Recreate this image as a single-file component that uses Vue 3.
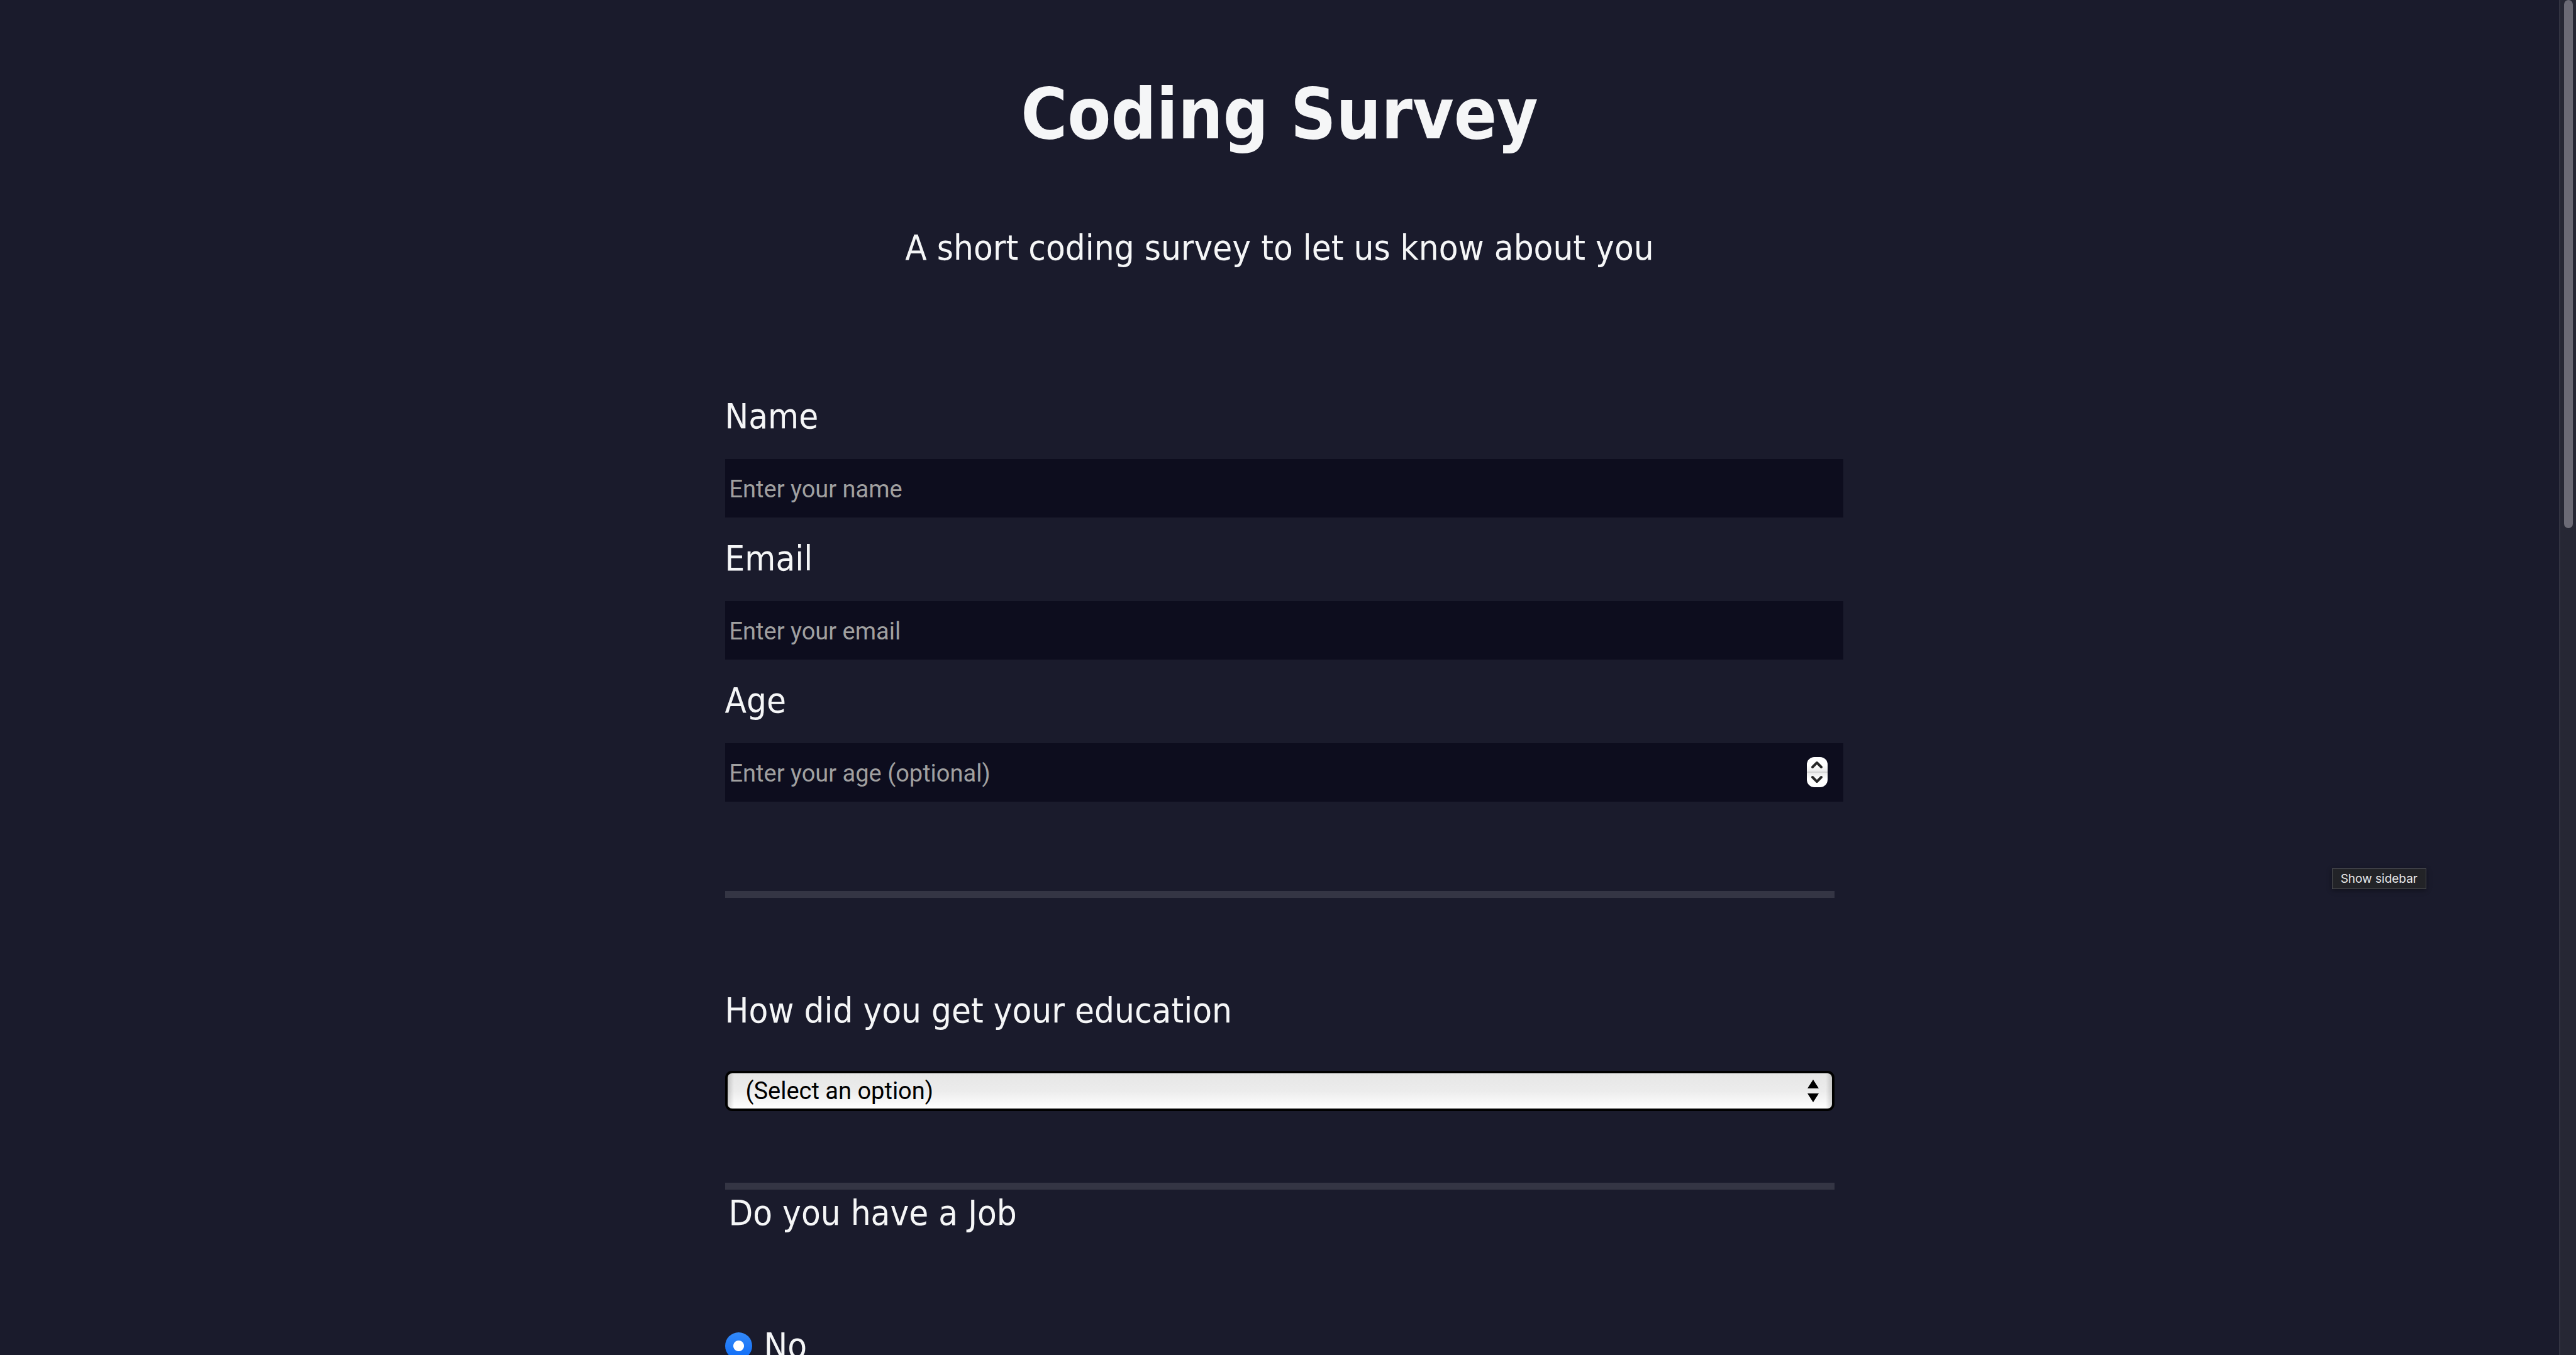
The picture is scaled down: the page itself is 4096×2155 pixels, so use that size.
<script setup>
import { reactive } from 'vue'

const form = reactive({ name: '', email: '', age: '', education: '', job: 'no' })

const fields = [
  { key: 'name', type: 'text', label: 'Name', placeholder: 'Enter your name' },
  { key: 'email', type: 'email', label: 'Email', placeholder: 'Enter your email' },
  { key: 'age', type: 'number', label: 'Age', placeholder: 'Enter your age (optional)' },
]

function step(by) {
  form.age = Math.max(0, Number(form.age || 0) + by)
}
</script>

<template>
  <div class="window">
    <main class="page">
      <h1 class="title">Coding Survey</h1>
      <p class="intro">A short coding survey to let us know about you</p>

      <form class="survey" @submit.prevent>
        <div v-for="field in fields" :key="field.key" class="field">
          <label class="label" :for="field.key">{{ field.label }}</label>
          <div class="control">
            <input
              :id="field.key"
              v-model="form[field.key]"
              class="input"
              :type="field.type"
              :placeholder="field.placeholder"
            />
            <div v-if="field.type === 'number'" class="stepper">
              <button type="button" aria-label="Increase" @click="step(1)">
                <svg viewBox="0 0 20 14"><path d="M3 11 L10 4 L17 11" /></svg>
              </button>
              <button type="button" aria-label="Decrease" @click="step(-1)">
                <svg viewBox="0 0 20 14"><path d="M3 3 L10 10 L17 3" /></svg>
              </button>
            </div>
          </div>
        </div>

        <hr class="rule rule-first" />

        <label class="label" for="education">How did you get your education</label>
        <div class="picker">
          <select id="education" v-model="form.education" class="select">
            <option value="">(Select an option)</option>
          </select>
          <svg class="arrows" viewBox="0 0 18 36" aria-hidden="true">
            <path d="M9 0 L18 14 H0 Z M0 22 H18 L9 36 Z" />
          </svg>
        </div>

        <hr class="rule rule-second" />

        <fieldset class="group">
          <legend class="label legend">Do you have a Job</legend>
          <label class="choice label">
            <input v-model="form.job" class="radio" type="radio" name="job" value="no" />
            No
          </label>
        </fieldset>
      </form>
    </main>

    <div class="scrollbar"><div class="thumb"></div></div>
    <div class="tooltip" role="tooltip">Show sidebar</div>
  </div>
</template>

<style>
body {
  background: #1a1b2c;
}
</style>

<style scoped>
.window {
  position: relative;
  display: flex;
  height: 100vh;
  overflow: hidden;
  background: #1a1b2c;
  color: #f5f6f7;
  font-family: Tahoma, "DejaVu Sans Condensed", "DejaVu Sans", sans-serif;
  font-size: 56px;
  line-height: 68px;
}

.page {
  flex: 1;
  padding-top: 113px;
}

.title {
  margin: 0;
  font-size: 112px;
  line-height: 136px;
  font-weight: 700;
  text-align: center;
}

.intro {
  margin: 111px 0 200px;
  text-align: center;
}

.survey {
  width: 100%;
  max-width: 1764px;
  margin: 0 auto;
}

.field {
  margin-bottom: 31px;
}

.label {
  display: block;
}

.control {
  position: relative;
  width: calc(100% + 14px);
  margin-top: 34px;
}

.input {
  display: block;
  box-sizing: border-box;
  width: 100%;
  height: 93px;
  padding: 2px 7px 0;
  border: 0;
  background: #0d0d1e;
  color: #f5f6f7;
  font-family: Roboto, sans-serif;
  font-size: 38px;
  appearance: textfield;
}

.input::-webkit-inner-spin-button {
  display: none;
}

.input::placeholder {
  color: #a0a0a0;
}

.stepper {
  position: absolute;
  top: 22px;
  right: 25px;
  display: flex;
  flex-direction: column;
  width: 33px;
  height: 48px;
  overflow: hidden;
  border-radius: 12px;
  background: linear-gradient(#fff 28%, #ececec 47%, #c8c8c8 50%, #ececec 53%, #fff 72%);
}

.stepper button {
  display: flex;
  flex: 1;
  align-items: center;
  justify-content: center;
  padding: 0;
  border: 0;
  background: none;
}

.stepper svg {
  width: 20px;
  height: 14px;
  fill: none;
  stroke: #262626;
  stroke-width: 4;
  stroke-linecap: round;
  stroke-linejoin: round;
}

.rule {
  height: 11px;
  border: 0;
  background: #343544;
}

.rule-first {
  margin: 142px 0 145px;
}

.rule-second {
  margin: 114px 0 3px;
}

.picker {
  position: relative;
  margin-top: 62px;
}

.select {
  display: block;
  box-sizing: border-box;
  width: 100%;
  height: 64px;
  padding: 0 60px 0 29px;
  border: 4px solid #000;
  border-radius: 11px;
  background:
    linear-gradient(90deg, rgba(0, 0, 0, 0.16), transparent 10px, transparent calc(100% - 10px), rgba(0, 0, 0, 0.16)),
    linear-gradient(#e6e6e6, #ececec 50%, #fff);
  color: #000;
  font-family: Roboto, sans-serif;
  font-size: 38px;
  appearance: none;
}

.arrows {
  position: absolute;
  top: 14px;
  right: 25px;
  width: 18px;
  height: 36px;
  pointer-events: none;
}

.group {
  margin: 0;
  padding: 0;
  border: 0;
}

.legend {
  padding: 0 6px;
}

.choice {
  display: flex;
  align-items: center;
  gap: 19px;
  margin-top: 143px;
}

.radio {
  width: 43px;
  height: 43px;
  margin: 0;
  border-radius: 50%;
  background:
    radial-gradient(circle, #fff 8px, transparent 9px),
    linear-gradient(#3389f8, #0f6df8);
  appearance: none;
}

.scrollbar {
  box-sizing: border-box;
  width: 27px;
  padding-left: 6px;
  border-left: 2px solid #323341;
  background: #262734;
}

.thumb {
  width: 14px;
  height: 39vh;
  border-radius: 7px;
  background: #6b6a75;
}

.tooltip {
  position: absolute;
  top: 1381px;
  right: 238px;
  padding: 0 13px;
  border: 1px solid #4a4b4f;
  background: #222327;
  box-shadow: 0 2px 8px rgba(0, 0, 0, 0.4);
  color: #e8e8e8;
  font-family: Inter, sans-serif;
  font-size: 19px;
  line-height: 31px;
}
</style>
